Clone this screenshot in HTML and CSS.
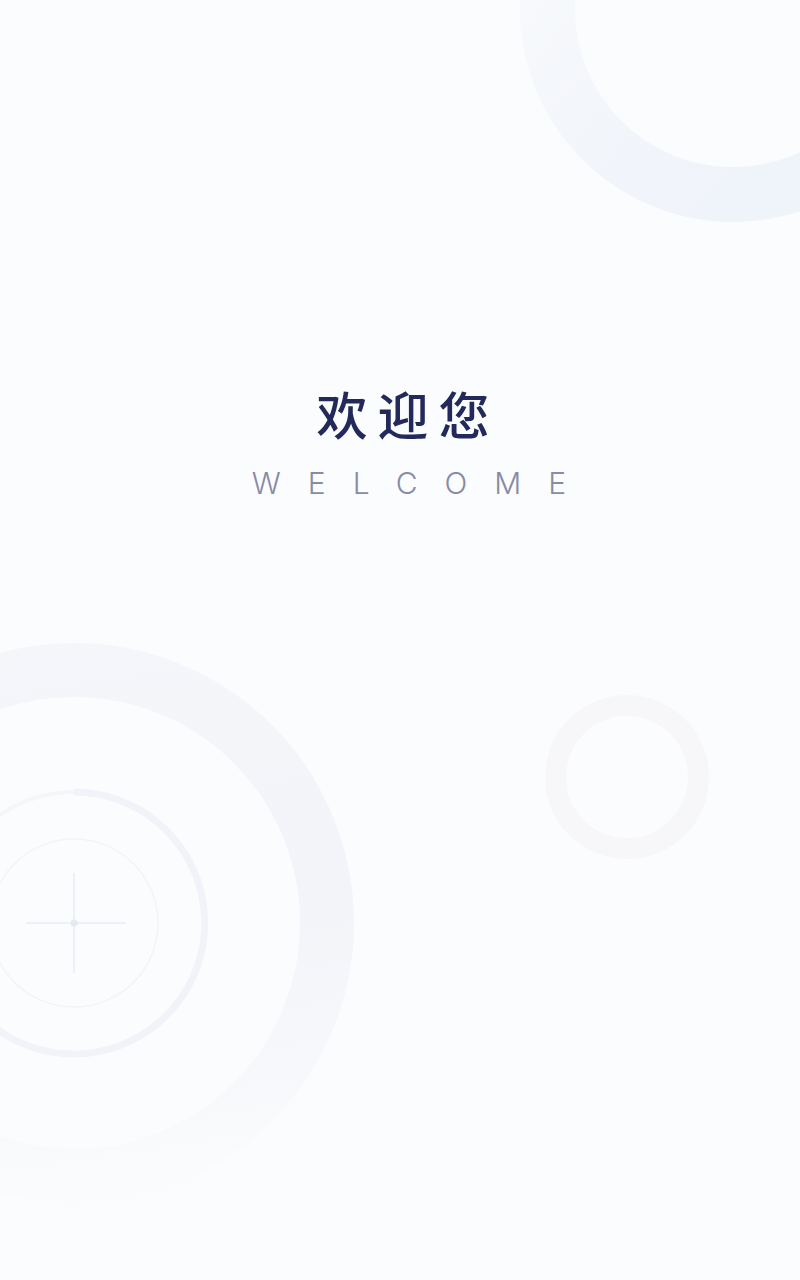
FILE: index.html
```html
<!DOCTYPE html>
<html lang="zh">
<head>
<meta charset="utf-8">
<title>欢迎您</title>
<link rel="stylesheet" href="styles.css">
</head>
<body>
<div class="screen">
  <svg class="decor" width="800" height="1280" viewBox="0 0 800 1280" aria-hidden="true">
    <defs>
      <linearGradient id="gTop" x1="520" y1="0" x2="760" y2="222" gradientUnits="userSpaceOnUse">
        <stop offset="0" stop-color="#f7f9fc"/>
        <stop offset="0.5" stop-color="#f2f5fa"/>
        <stop offset="1" stop-color="#eff3fa"/>
      </linearGradient>
      <linearGradient id="gBig" x1="74" y1="643" x2="160" y2="1203" gradientUnits="userSpaceOnUse">
        <stop offset="0" stop-color="#f4f6fa"/>
        <stop offset="0.5" stop-color="#f2f4f9"/>
        <stop offset="0.8" stop-color="#f6f8fb"/>
        <stop offset="1" stop-color="#fbfcfd"/>
      </linearGradient>
    </defs>
    <!-- top right ring -->
    <circle cx="733" cy="9" r="185.5" fill="none" stroke="url(#gTop)" stroke-width="55"/>
    <!-- big ring bottom left -->
    <circle cx="74" cy="923" r="253" fill="none" stroke="url(#gBig)" stroke-width="54"/>
    <!-- middle thin ring -->
    <circle cx="74" cy="923" r="131" fill="none" stroke="#f5f6f9" stroke-width="4"/>
    <path d="M74 792 A131 131 0 1 1 -40 988" fill="none" stroke="#f1f3f8" stroke-width="7"/>
    <!-- inner thin circle -->
    <circle cx="74" cy="923" r="84" fill="none" stroke="#f3f4f7" stroke-width="1.5"/>
    <!-- crosshair -->
    <line x1="26" y1="923" x2="126" y2="923" stroke="#eaedf5" stroke-width="1.5"/>
    <line x1="74" y1="873" x2="74" y2="973" stroke="#eaedf5" stroke-width="1.5"/>
    <circle cx="74" cy="923" r="3.5" fill="#e4e8f2"/>
    <!-- small ring right -->
    <circle cx="627" cy="777" r="71.5" fill="none" stroke="#f7f7f9" stroke-width="21"/>
  </svg>

  <main class="welcome">
    <h1 class="title">欢迎您</h1>
    <p class="subtitle">WELCOME</p>
  </main>
</div>
</body>
</html>
```

FILE: styles.css
```css
html, body {
  margin: 0;
  padding: 0;
}

body {
  width: 800px;
  height: 1280px;
  background: #fbfcfd;
  font-family: "Noto Sans CJK SC", "Noto Sans", sans-serif;
  overflow: hidden;
}

.screen {
  position: relative;
  width: 800px;
  height: 1280px;
  background: #fbfcfd;
}

.decor {
  position: absolute;
  left: 0;
  top: 0;
  display: block;
}

.welcome {
  position: relative;
  display: flex;
  flex-direction: column;
  align-items: center;
  padding-top: 380px;
}

.title {
  margin: 0;
  font-family: "Noto Sans CJK SC", sans-serif;
  font-size: 51px;
  font-weight: 500;
  line-height: 66px;
  letter-spacing: 10px;
  padding-left: 16px;
  color: #232a5b;
}

.subtitle {
  margin: 19px 0 0;
  font-family: "Inter", "Liberation Sans", sans-serif;
  font-size: 30px;
  font-weight: 300;
  line-height: 36px;
  letter-spacing: 27px;
  padding-left: 45px;
  color: #878ba6;
}
```
